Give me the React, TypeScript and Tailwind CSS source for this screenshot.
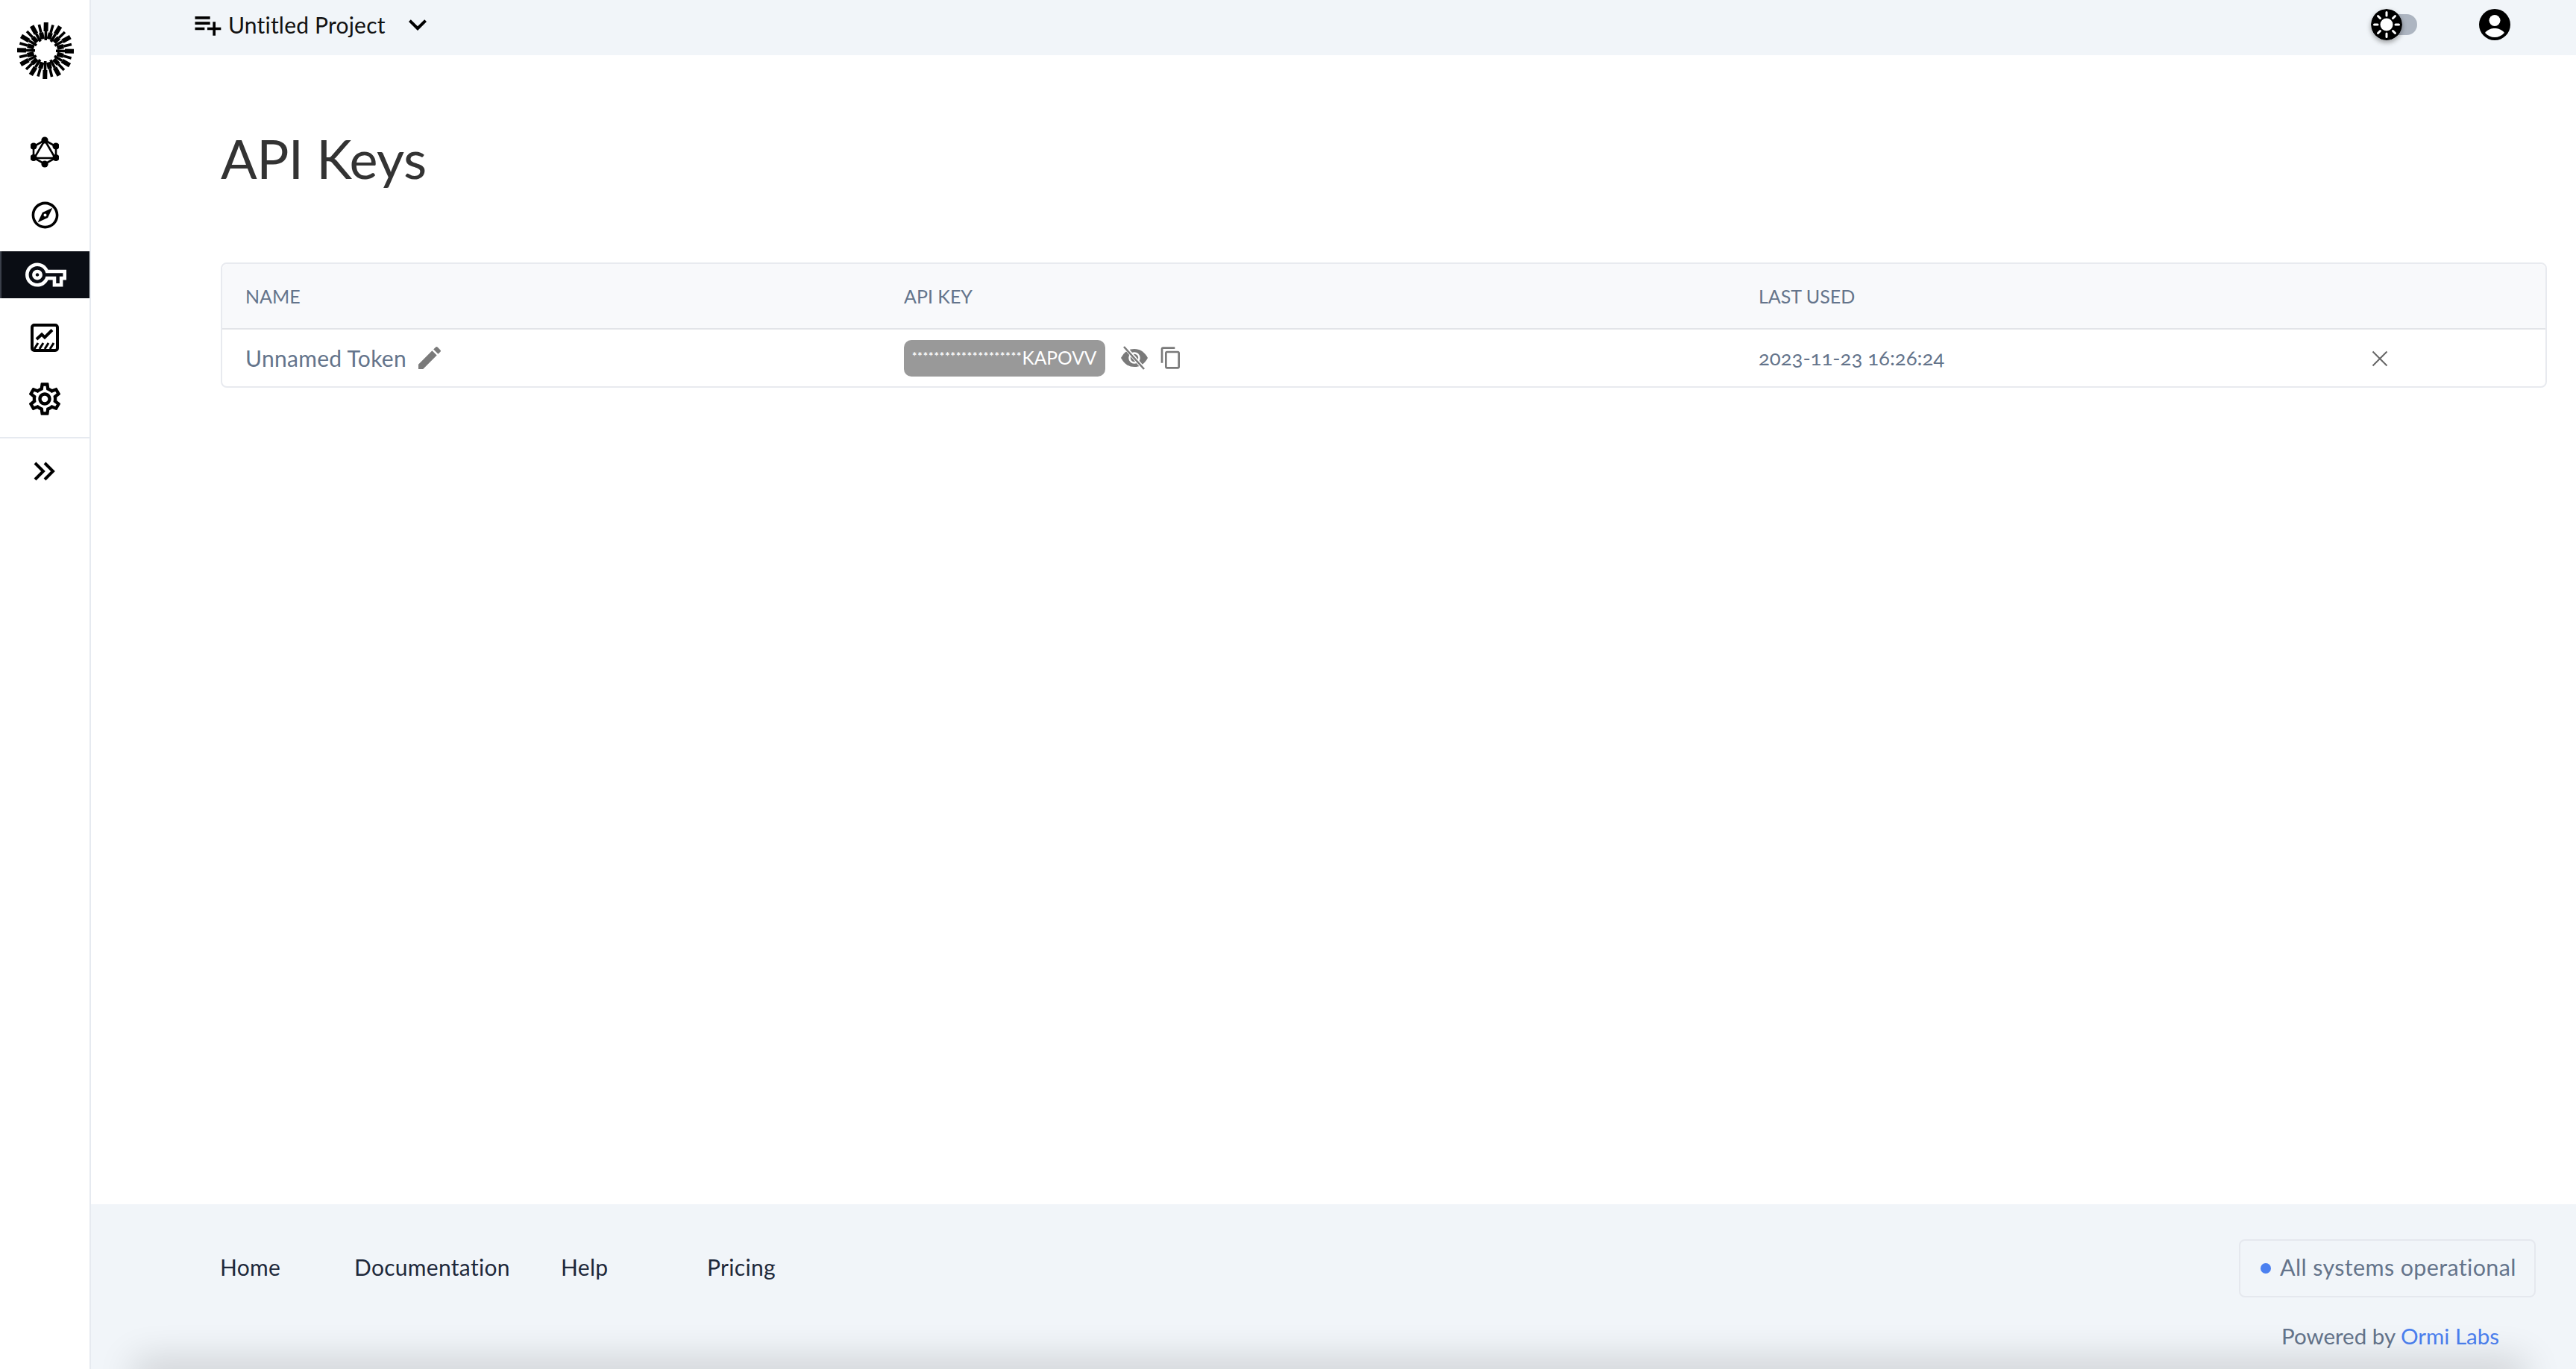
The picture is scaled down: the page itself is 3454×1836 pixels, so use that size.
import React from 'react';
import {
  MdPlaylistAdd,
  MdKeyboardArrowDown,
  MdOutlineExplore,
  MdOutlineVpnKey,
  MdOutlineSettings,
  MdEdit,
  MdOutlineContentCopy,
} from 'react-icons/md';

const font = { fontFamily: 'Lato, "Open Sans", sans-serif' };

// spokes of the logo: every spoke steps between a thin and a thick part
const spokes = Array.from({ length: 24 }, (_, i) => {
  const a = (i / 24) * Math.PI * 2 + 0.02;
  const even = i % 2 === 0;
  const parts = even
    ? [
        { from: 14, to: 26, w: 3.6 },
        { from: 26, to: 38, w: 6 },
      ]
    : [
        { from: 16, to: 25, w: 6 },
        { from: 25, to: 36, w: 3.6 },
      ];
  return parts.map((p) => ({
    x1: 38 + Math.cos(a) * p.from,
    y1: 38 + Math.sin(a) * p.from,
    x2: 38 + Math.cos(a) * p.to,
    y2: 38 + Math.sin(a) * p.to,
    w: p.w,
  }));
}).flat();

function Logo() {
  return (
    <svg width="76" height="76" viewBox="0 0 76 76">
      {spokes.map((r, i) => (
        <line key={i} x1={r.x1} y1={r.y1} x2={r.x2} y2={r.y2} stroke="#000" strokeWidth={r.w} />
      ))}
    </svg>
  );
}

function GraphqlIcon() {
  return (
    <svg width="38" height="42" viewBox="0 0 38 42" fill="none" stroke="#000" strokeWidth="2.6">
      <path d="M19 5 L34 13.5 V28.5 L19 37 L4 28.5 V13.5 Z" />
      <path d="M19 5 L33 29 H5 Z" />
      <g fill="#000" stroke="none">
        <circle cx="19" cy="5" r="4.6" />
        <circle cx="34" cy="13" r="4.6" />
        <circle cx="34" cy="28.5" r="4.6" />
        <circle cx="19" cy="37" r="4.6" />
        <circle cx="4" cy="28.5" r="4.6" />
        <circle cx="4" cy="13" r="4.6" />
      </g>
    </svg>
  );
}

function ChartIcon() {
  return (
    <svg width="38" height="38" viewBox="0 0 38 38" fill="none" stroke="#000">
      <rect x="2" y="2" width="34" height="34" rx="3" strokeWidth="4" />
      <path d="M8 21 L15 14.5 L19 18.5 L29 8.5" strokeWidth="4" />
      <path d="M5 34 L10 26 M12 34 L17 26 M19 34 L24 26 M26 34 L31 26" strokeWidth="3" />
    </svg>
  );
}

function DoubleChevron() {
  return (
    <svg width="30" height="26" viewBox="0 0 30 26" fill="none" stroke="#000" strokeWidth="4">
      <path d="M2 2 L13 13 L2 24" />
      <path d="M15 2 L26 13 L15 24" />
    </svg>
  );
}

function SunKnob() {
  return (
    <svg width="42" height="42" viewBox="0 0 42 42" className="rounded-full shadow-[0_3px_6px_rgba(0,0,0,0.35)]">
      <circle cx="21" cy="21" r="21" fill="#000" />
      <circle cx="21" cy="21" r="8.5" fill="#fff" />
      <g stroke="#fff" strokeWidth="3" strokeLinecap="round">
        <path d="M21 4.5 V9 M21 33 V37.5 M4.5 21 H9 M33 21 H37.5 M9.5 9.5 L12.5 12.5 M29.5 29.5 L32.5 32.5 M32.5 9.5 L29.5 12.5 M12.5 29.5 L9.5 32.5" />
      </g>
    </svg>
  );
}

function UserIcon() {
  return (
    <svg width="42" height="42" viewBox="0 0 42 42">
      <circle cx="21" cy="21" r="21" fill="#000" />
      <circle cx="21" cy="15.5" r="7.5" fill="#fff" />
      <path d="M8 32 C12 27 17 26 21 26 C25 26 30 27 34 32 C30 36 26 38 21 38 C16 38 12 36 8 32 Z" fill="#fff" />
    </svg>
  );
}

function EyeOff() {
  return (
    <svg width="36" height="32" viewBox="0 0 36 32">
      <path d="M0 16 C5 7 11 4 18 4 C25 4 31 7 36 16 C31 25 25 28 18 28 C11 28 5 25 0 16 Z" fill="#7a7a7a" />
      <circle cx="18" cy="16" r="6.5" fill="none" stroke="#fff" strokeWidth="2.5" />
      <path d="M5 1 L31 31" stroke="#fff" strokeWidth="5" />
      <path d="M4 1 L31 31" stroke="#7a7a7a" strokeWidth="2.6" />
    </svg>
  );
}

function CloseIcon() {
  return (
    <svg width="22" height="22" viewBox="0 0 22 22" fill="none" stroke="#666" strokeWidth="2">
      <path d="M1.5 1.5 L20.5 20.5 M20.5 1.5 L1.5 20.5" />
    </svg>
  );
}

export default function App() {
  return (
    <div className="flex h-screen w-full overflow-hidden bg-white" style={font}>
      <aside className="w-[122px] shrink-0 border-r-2 border-[#e6eaf0] bg-white">
        <div className="flex h-[183px] items-start justify-center pt-[30px] pl-px">
          <Logo />
        </div>
        <div className="flex h-[33px] items-start justify-center">
          <GraphqlIcon />
        </div>
        <div className="mt-[54px] flex h-[36px] items-center justify-center">
          <MdOutlineExplore size={43} color="#000" />
        </div>
        <div className="mt-[31px] flex h-[63px] items-center justify-center border-l-2 border-[#3a3f4a] bg-[#0a0d14]">
          <MdOutlineVpnKey size={55} color="#fff" />
        </div>
        <div className="mt-[34px] flex h-[38px] items-center justify-center">
          <ChartIcon />
        </div>
        <div className="mt-[41px] flex h-[44px] items-center justify-center">
          <MdOutlineSettings size={52} color="#000" />
        </div>
        <div className="mt-[29px] flex h-[73px] items-center justify-center border-t-2 border-[#e6eaf0] pt-[17px]">
          <DoubleChevron />
        </div>
      </aside>

      <div className="flex min-w-0 flex-1 flex-col">
        <header className="flex h-[74px] shrink-0 items-center bg-[#f1f5f9] pb-[8px] pl-[136px] pr-[88px]">
          <MdPlaylistAdd size={44} color="#000" className="-ml-[2px] mr-[6px]" />
          <span className="text-[30px] tracking-[0.2px] text-[#111]">Untitled Project</span>
          <MdKeyboardArrowDown size={48} color="#000" className="ml-[19px]" />
          <div className="ml-auto flex items-center">
            <div className="relative h-[28px] w-[60px] rounded-full bg-[#adb5c1]">
              <div className="absolute -left-[2px] -top-[7px] h-[42px] w-[42px]">
                <SunKnob />
              </div>
            </div>
            <div className="ml-[83px]">
              <UserIcon />
            </div>
          </div>
        </header>

        <main className="flex-1 bg-white pl-[174px] pr-[39px]">
          <h1 className="mt-[94px] text-[72px] font-normal leading-[88px] tracking-[-0.6px] text-[#333]">API Keys</h1>
          <div className="mt-[96px] rounded-[8px] border-2 border-[#e8eaef] text-[#64748b]">
            <div className="grid h-[88px] grid-cols-[883px_1146px_832px_1fr] items-center rounded-t-[8px] border-b-2 border-[#e2e4e8] bg-[#f8f9fb] pl-[31px] text-[25px] leading-none">
              <span>NAME</span>
              <span>API KEY</span>
              <span>LAST USED</span>
              <span />
            </div>
            <div className="grid h-[76px] grid-cols-[883px_1146px_832px_1fr] items-center pl-[31px] text-[30px] leading-none">
              <div className="flex items-center">
                <span className="tracking-[0.3px]">Unnamed Token</span>
                <MdEdit size={40} color="#7a7a7a" className="ml-[11px]" />
              </div>
              <div className="flex items-center">
                <div className="flex h-[49px] w-[270px] items-center rounded-[10px] bg-[#999999] pl-[11px] text-white">
                  <span className="-mt-[6px] text-[15px] font-bold tracking-[1px]">********************</span>
                  <span className="text-[24.5px]">KAPOVV</span>
                </div>
                <div className="ml-[21px]">
                  <EyeOff />
                </div>
                <MdOutlineContentCopy size={32} color="#7a7a7a" className="ml-[15px]" />
              </div>
              <span className="text-[27.5px] oldstyle-nums">2023-11-23 16:26:24</span>
              <div className="-ml-[10px] pt-[2px]">
                <CloseIcon />
              </div>
            </div>
          </div>
        </main>

        <footer className="relative flex h-[221px] shrink-0 overflow-hidden bg-[#f1f5f9] pl-[174px] pr-[54px]">
          <nav className="-ml-[1px] mt-[62px] grid h-[40px] grid-cols-[180px_277px_196px_auto] items-center text-[30px] tracking-[0.3px] text-[#1e293b]">
            <span>Home</span>
            <span>Documentation</span>
            <span>Help</span>
            <span>Pricing</span>
          </nav>
          <div className="ml-auto flex flex-col items-end">
            <div className="mt-[47px] flex h-[78px] w-[398px] items-center rounded-[8px] border-2 border-[#e5e8ee] pl-[27px] text-[#64748b]">
              <span className="h-[14px] w-[14px] rounded-full bg-[#4b80f0]" />
              <span className="ml-[12px] -mt-[2px] text-[30.5px] tracking-[0.35px]">All systems operational</span>
            </div>
            <div className="mr-[49px] mt-[30px] text-[29.5px] leading-[44px] text-[#64748b]">
              Powered by <span className="text-[#4b80f0]">Ormi Labs</span>
            </div>
          </div>
          {/* shadow coming up from below the fold */}
          <div className="absolute left-[70px] right-[80px] top-full h-[20px] shadow-[0_0_50px_12px_rgba(0,0,0,0.16)]" />
        </footer>
      </div>
    </div>
  );
}
